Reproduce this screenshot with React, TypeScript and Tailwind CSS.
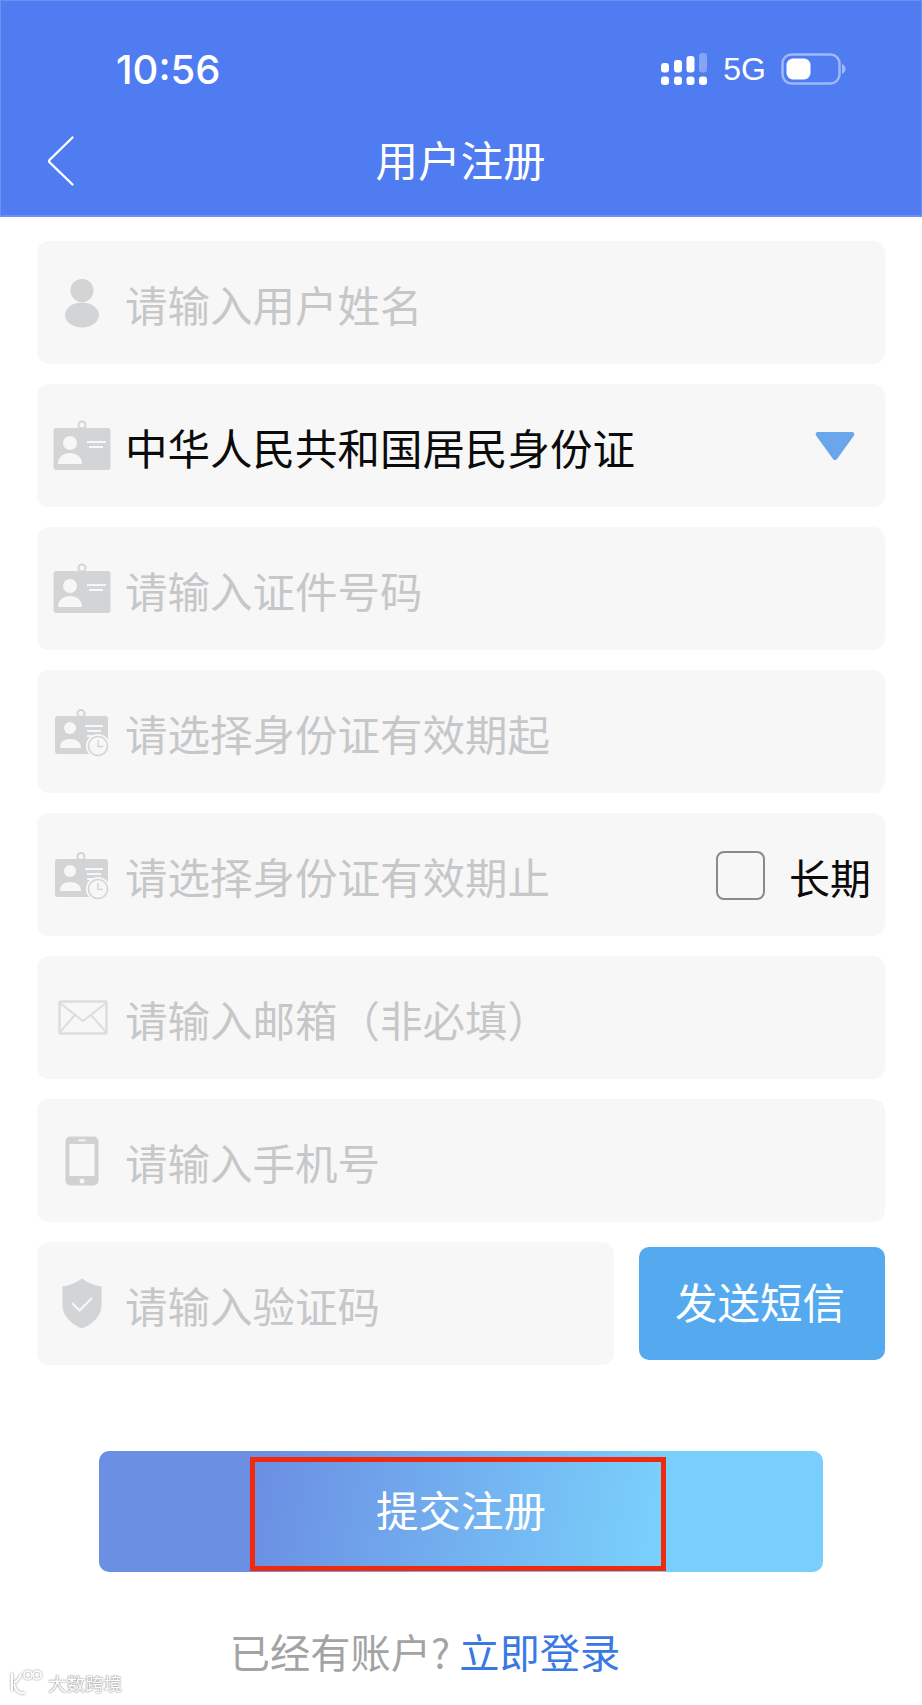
import React from "react";

const G = "#d2d4d5";
const BG = "#f7f7f7";

function Person() {
  return (
    <svg width="36" height="50" viewBox="0 0 36 50">
      <circle cx="18" cy="12.500" r="11.500" fill={G} />
      <ellipse cx="18" cy="37" rx="17" ry="12.500" fill={G} />
    </svg>
  );
}

function IdCard() {
  return (
    <svg width="58" height="52" viewBox="0 0 58 52" className="mt-[-4px]">
      <circle cx="29" cy="7" r="3.500" fill="none" stroke={G} strokeWidth="2" />
      <rect x="0.500" y="10" width="57" height="42" rx="3" fill={G} />
      <circle cx="17" cy="25" r="7" fill={BG} />
      <path d="M5 46c0-7 5-11 12-11s12 4 12 11z" fill={BG} />
      <path d="M34 24h19M36 29h14" stroke={BG} strokeWidth="2" />
    </svg>
  );
}

function IdClock() {
  return (
    <svg width="56" height="50" viewBox="0 0 56 50">
      <circle cx="27" cy="6.500" r="3.500" fill="none" stroke={G} strokeWidth="2" />
      <rect x="1" y="9" width="53" height="38" rx="3" fill={G} />
      <circle cx="16" cy="21" r="6" fill={BG} />
      <path d="M6 41c0-6 4-9 10-9s11 3 11 9z" fill={BG} />
      <path d="M31 19h18M33 24h14M33 29h8" stroke={BG} strokeWidth="2" />
      <circle cx="44" cy="39" r="12" fill={BG} />
      <circle cx="44" cy="39" r="9.500" fill="none" stroke={G} strokeWidth="1.600" />
      <path d="M44 33v6.500h5" fill="none" stroke={G} strokeWidth="1.400" />
    </svg>
  );
}

function Mail() {
  return (
    <svg width="50" height="35" viewBox="0 0 50 35" className="ml-[1px]">
      <rect x="1.500" y="1.500" width="47" height="32" rx="1.500" fill="none" stroke="#dcdddd" strokeWidth="2.500" />
      <path d="M2 3l23 18L48 3M2 32l15-17M48 32L33 15" fill="none" stroke="#dcdddd" strokeWidth="2" />
    </svg>
  );
}

function Phone() {
  return (
    <svg width="34" height="50" viewBox="0 0 34 50">
      <rect x="0.500" y="0.500" width="33" height="49" rx="5" fill="#cfd1d2" />
      <rect x="4.500" y="8" width="25" height="32" fill={BG} />
      <rect x="13" y="3.500" width="8" height="1.800" rx="0.900" fill={BG} />
      <circle cx="17" cy="45" r="2.500" fill={BG} />
    </svg>
  );
}

function Shield() {
  return (
    <svg width="40" height="51" viewBox="0 0 40 51">
      <path d="M20 0.500C26 5 32 7.500 39.500 8.500V27C39.500 38 31 46 20 50.500C9 46 0.500 38 0.500 27V8.500C8 7.500 14 5 20 0.500z" fill={G} />
      <path d="M10 25l7.500 7.500L30 20" fill="none" stroke={BG} strokeWidth="2.200" />
    </svg>
  );
}

function SignalAndBattery() {
  return (
    <div className="flex items-center">
      <svg width="46" height="32" viewBox="0 0 46 32">
        <rect x="0" y="10" width="8" height="9.500" rx="3" fill="#fff" />
        <rect x="13" y="7" width="8" height="12.500" rx="3" fill="#fff" />
        <rect x="25.500" y="3" width="8" height="16.500" rx="3" fill="#fff" />
        <rect x="38" y="0" width="8" height="19.500" rx="3" fill="#85a4f5" />
        <rect x="0" y="23.500" width="8" height="8.500" rx="3" fill="#fff" />
        <rect x="13" y="23.500" width="8" height="8.500" rx="3" fill="#fff" />
        <rect x="25.500" y="23.500" width="8" height="8.500" rx="3" fill="#fff" />
        <rect x="38" y="23.500" width="8" height="8.500" rx="3" fill="#fff" />
      </svg>
      <span className="ml-[16px] text-[32px] leading-none text-white [font-family:'Liberation_Sans',sans-serif]">5G</span>
      <svg width="66" height="32" viewBox="0 0 66 32" className="ml-[15px]">
        <rect x="1.500" y="1.500" width="57" height="29" rx="9" fill="none" stroke="#9fb8f7" strokeWidth="2.500" />
        <rect x="5.500" y="5.500" width="24" height="21" rx="6.500" fill="#fff" />
        <path d="M61 11c2.500 1 3.500 3 3.500 5s-1 4-3.500 5z" fill="#9fb8f7" />
      </svg>
    </div>
  );
}

function Row({ icon, children, muted = true, className = "" }: { icon: React.ReactNode; children?: React.ReactNode; muted?: boolean; className?: string }) {
  return (
    <div className={`flex h-[123px] items-center rounded-[12px] bg-[#f7f7f7] ${className}`}>
      <div className="flex w-[90px] shrink-0 justify-center">{icon}</div>
      <div className={`ml-[-2px] flex-1 pt-[3px] text-[42.5px] leading-none font-normal ${muted ? "text-[#c6c7c8]" : "text-[#0b0b0b]"}`}>{children}</div>
    </div>
  );
}

export default function App() {
  return (
    <div className="relative h-[1705px] w-[922px] overflow-hidden bg-white [font-family:'Noto_Sans_CJK_SC',sans-serif]">
      <header className="h-[217px] border border-b-2 border-[#6c91f2] bg-[#4f7cf0] text-white">
        <div className="flex h-[116px] items-center justify-between pt-[20px] pr-[74px] pl-[115px]">
          <span className="mt-[2px] text-[40px] leading-none font-medium [font-family:'Inter',sans-serif]">10:56</span>
          <SignalAndBattery />
        </div>
        <div className="flex h-[88px] items-center pl-[45px]">
          <svg width="30" height="52" viewBox="0 0 30 52" className="shrink-0">
            <path d="M26.500 2.500L3.500 25c-.6.6-.6 1.400-.2 2l23.200 22.500" fill="none" stroke="#fff" strokeWidth="2.400" strokeLinecap="round" />
          </svg>
          <h1 className="flex-1 pr-[76px] pb-[4px] text-center text-[42.5px] leading-none font-normal">用户注册</h1>
        </div>
      </header>

      <main className="flex flex-col gap-[20px] px-[37px] pt-[24px]">
        <Row icon={<Person />}>请输入用户姓名</Row>
        <Row icon={<IdCard />} muted={false}>
          <div className="flex items-center justify-between pr-[30px]">
            <span>中华人民共和国居民身份证</span>
            <svg width="40" height="30" viewBox="0 0 40 30" className="mt-[-3px]">
              <path d="M3 1h34c2 0 3 2 2 3.500L22 28c-1 1.500-3 1.500-4 0L1 4.500C0 3 1 1 3 1z" fill="#6aa6ea" />
            </svg>
          </div>
        </Row>
        <Row icon={<IdCard />}>请输入证件号码</Row>
        <Row icon={<IdClock />}>请选择身份证有效期起</Row>
        <Row icon={<IdClock />}>
          <div className="flex items-center justify-between pr-[14px]">
            <span>请选择身份证有效期止</span>
            <div className="flex items-center gap-[24px]">
              <div className="mt-[-2px] h-[49px] w-[49px] rounded-[8px] border-[2.500px] border-[#8a8a8a]" />
              <span className="text-[41px] text-[#0b0b0b]">长期</span>
            </div>
          </div>
        </Row>
        <Row icon={<Mail />}>请输入邮箱（非必填）</Row>
        <Row icon={<Phone />}>请输入手机号</Row>
        <div className="flex items-center justify-between">
          <Row icon={<Shield />} className="w-[577px]">请输入验证码</Row>
          <button className="h-[113px] w-[246px] rounded-[10px] bg-[#54a9ef] pr-[4px] pb-[4px] text-[42.5px] leading-none font-normal text-white">发送短信</button>
        </div>
      </main>

      <div className="relative mx-[99px] mt-[86px] flex h-[121px] items-center justify-center rounded-[10px] bg-[linear-gradient(100deg,#6b8fe3_22%,#79cffb_76%)] pb-[4px]">
        <span className="text-[42.5px] leading-none font-normal text-white">提交注册</span>
        <div className="absolute top-[6px] left-[151px] h-[114px] w-[416px] border-[5px] border-[#f02a10]" />
      </div>

      <p className="mt-[59px] pr-[72px] text-center text-[40.250px] leading-none font-normal text-[#a3a3a3]">
        已经有账户?<span className="text-[#3a78e2]"> 立即登录</span>
      </p>

      <div className="absolute bottom-[8px] left-[8px] flex items-center gap-[4px] text-white [text-shadow:0_0_2px_#8a8a8a,0_0_1px_#8a8a8a]">
        <svg width="36" height="28" viewBox="0 0 36 28" style={{ filter: "drop-shadow(0 0 1px #8a8a8a)" }}>
          <path d="M4 4v18M6 14c3-2 6-5 7-9M6 15c1 6 5 10 11 9" fill="none" stroke="#fff" strokeWidth="2" />
          <circle cx="20" cy="6" r="4" fill="none" stroke="#fff" strokeWidth="1.600" />
          <circle cx="29" cy="6" r="4" fill="none" stroke="#fff" strokeWidth="1.600" />
        </svg>
        <span className="text-[18.500px] leading-none">大数跨境</span>
      </div>
    </div>
  );
}
